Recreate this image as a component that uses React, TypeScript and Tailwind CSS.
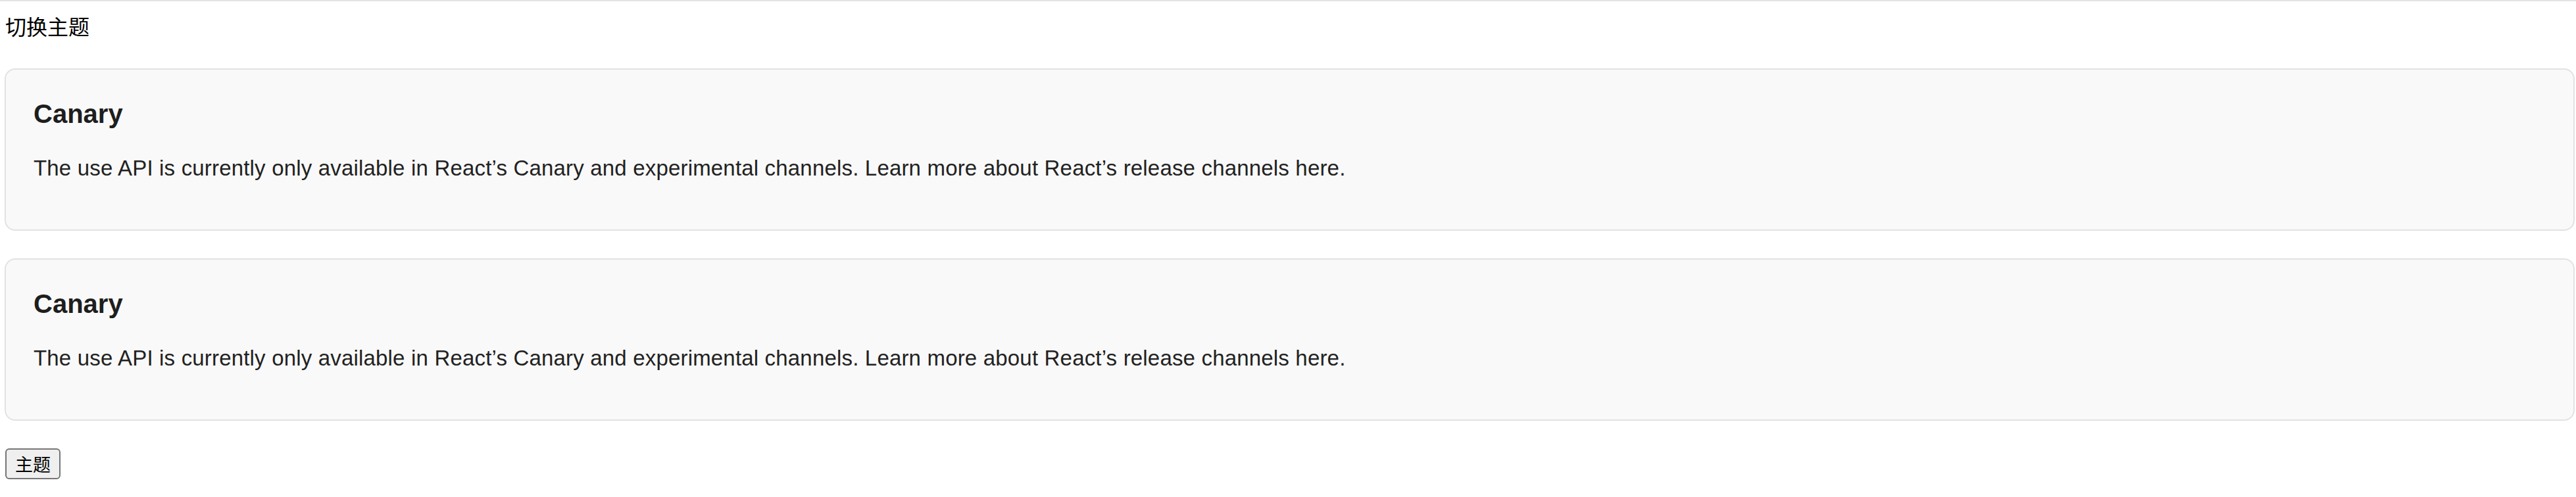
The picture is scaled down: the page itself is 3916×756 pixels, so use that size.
import React from 'react';

const body =
  'The use API is currently only available in React’s Canary and experimental channels. Learn more about React’s release channels here.';

const Card: React.FC<{ className?: string }> = ({ className = '' }) => (
  <div
    className={`ml-[7px] mr-[2px] border-2 border-[#e2e2e2] rounded-[16px] bg-[#f9f9f9] pl-[42px] pr-[40px] pt-[43px] pb-[71px] ${className}`}
  >
    <h3 className="text-[40px] leading-[48px] font-bold text-[#1e1e1e]">Canary</h3>
    <p className="mt-[37px] text-[33px] leading-[44px] tracking-[0.18px] text-[#222]">{body}</p>
  </div>
);

export default function App() {
  return (
    <div className="min-h-[756px] bg-white font-['Liberation_Sans','Noto_Sans_CJK_SC',sans-serif]">
      <div className="h-[2px] bg-[#e3e3e3]" />
      <div className="mt-[18px] pl-[8px] text-[32px] leading-[44px] text-black">切换主题</div>
      <Card className="mt-[40px]" />
      <Card className="mt-[42px]" />
      <div className="mt-[42px] pl-[8px]">
        <button className="w-[84px] h-[47px] flex items-center justify-center border-2 border-[#767676] rounded-[6px] bg-[#efefef] text-[27px] leading-none text-black font-['Noto_Sans_CJK_SC',sans-serif]">
          主题
        </button>
      </div>
    </div>
  );
}
